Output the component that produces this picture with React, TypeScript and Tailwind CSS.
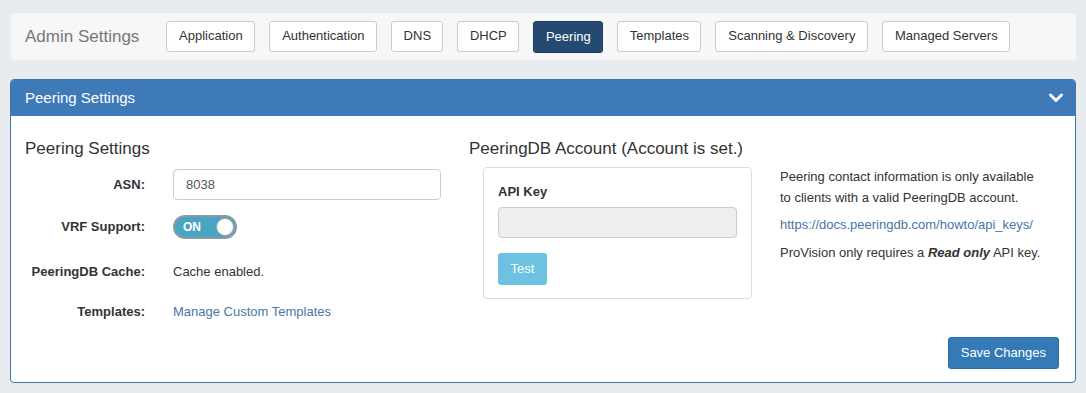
import React from 'react';

const tabs: [string, string][] = [
  ['Application', 'w-[89px]'],
  ['Authentication', 'w-[108px]'],
  ['DNS', 'w-[52px]'],
  ['DHCP', 'w-[62px]'],
  ['Peering', 'w-[70px]'],
  ['Templates', 'w-[84px]'],
  ['Scanning & Discovery', 'w-[153px]'],
  ['Managed Servers', 'w-[128px]'],
];

const ChevronDown = () => (
  <svg width="14" height="10" viewBox="0 0 14 10">
    <path d="M1.5 2 L7 7.5 L12.5 2" fill="none" stroke="#fff" strokeWidth="3" strokeLinecap="round" strokeLinejoin="round" />
  </svg>
);

const App: React.FC = () => {
  return (
    <div className="min-h-[393px] bg-[#e9ecef] pt-[13px] px-[10px] text-[13px] text-[#333]" style={{ fontFamily: '"Liberation Sans", Arial, sans-serif' }}>
      <div className="ml-px h-[47px] flex items-center rounded bg-[#f7f7f7] pl-[14px]">
        <span className="text-[17px] text-[#777] mr-[27px]">Admin Settings</span>
        <div className="flex gap-[14px]">
          {tabs.map(([t, w]) =>
            t === 'Peering' ? (
              <button key={t} className={`${w} h-[32px] rounded-[3px] border border-[#1d3d60] bg-[#254a72] text-white`}>{t}</button>
            ) : (
              <button key={t} className={`${w} h-[31px] rounded-[3px] border border-[#ccc] bg-white text-[#333]`}>{t}</button>
            )
          )}
        </div>
      </div>

      <div className="mt-[19px] h-[304px] rounded border border-[#3d76ad] bg-white overflow-hidden flex flex-col">
        <div className="h-[36px] shrink-0 bg-[#3f7ab8] flex items-center justify-between pl-[14px] pr-[12px]">
          <span className="text-[15px] text-white">Peering Settings</span>
          <ChevronDown />
        </div>

        <div className="flex flex-1 relative">
          <div className="w-[445px] pl-[14px] pt-[23px]">
            <h3 className="text-[17px] leading-[20px] mb-[10px]">Peering Settings</h3>
            <div className="grid grid-cols-[120px_1fr] gap-x-[28px] items-center">
              <label className="text-right font-bold">ASN:</label>
              <input
                defaultValue="8038"
                className="h-[31px] w-[268px] rounded border border-[#ccc] px-[12px] text-[13px] text-[#555] outline-none"
              />
              <label className="text-right font-bold mt-[15px]">VRF Support:</label>
              <div className="mt-[15px]">
                <div className="w-[64px] h-[24px] rounded-full border-2 border-[#8a9aa3] bg-[#4aa5c1] flex items-center justify-between pl-[8px] pr-[1px]">
                  <span className="text-white font-bold text-[12px] leading-none">ON</span>
                  <span className="w-[18px] h-[18px] rounded-full bg-white border border-[#9aa]" />
                </div>
              </div>
              <label className="text-right font-bold mt-[23px]">PeeringDB Cache:</label>
              <span className="mt-[23px]">Cache enabled.</span>
              <label className="text-right font-bold mt-[20px]">Templates:</label>
              <a className="mt-[20px] text-[#4a76a8]">Manage Custom Templates</a>
            </div>
          </div>

          <div className="pt-[23px] pl-[13px]">
            <h3 className="text-[17px] leading-[20px] mb-[8px]">PeeringDB Account (Account is set.)</h3>
            <div className="flex">
              <div className="ml-[14px] w-[269px] h-[132px] rounded border border-[#ddd] px-[14px] pt-[14px]">
                <div className="font-bold mb-[5px]">API Key</div>
                <div className="h-[31px] rounded border border-[#ccc] bg-[#eee]" />
                <button className="mt-[15px] h-[32px] w-[49px] rounded-[3px] bg-[#6cc2e0] text-white text-[13px]">Test</button>
              </div>
              <div className="ml-[28px] -mt-[1px] text-[13px] leading-[21px]">
                <p>Peering contact information is only available<br />to clients with a valid PeeringDB account.</p>
                <p className="mt-[6px] text-[#4a76a8]">https://docs.peeringdb.com/howto/api_keys/</p>
                <p className="mt-[7px]">ProVision only requires a <b><i>Read only</i></b> API key.</p>
              </div>
            </div>
          </div>

          <button className="absolute right-[16px] bottom-[13px] h-[32px] px-[12px] rounded-[3px] border border-[#2e6da4] bg-[#337ab7] text-white text-[13px]">Save Changes</button>
        </div>
      </div>
    </div>
  );
};

export default App;
